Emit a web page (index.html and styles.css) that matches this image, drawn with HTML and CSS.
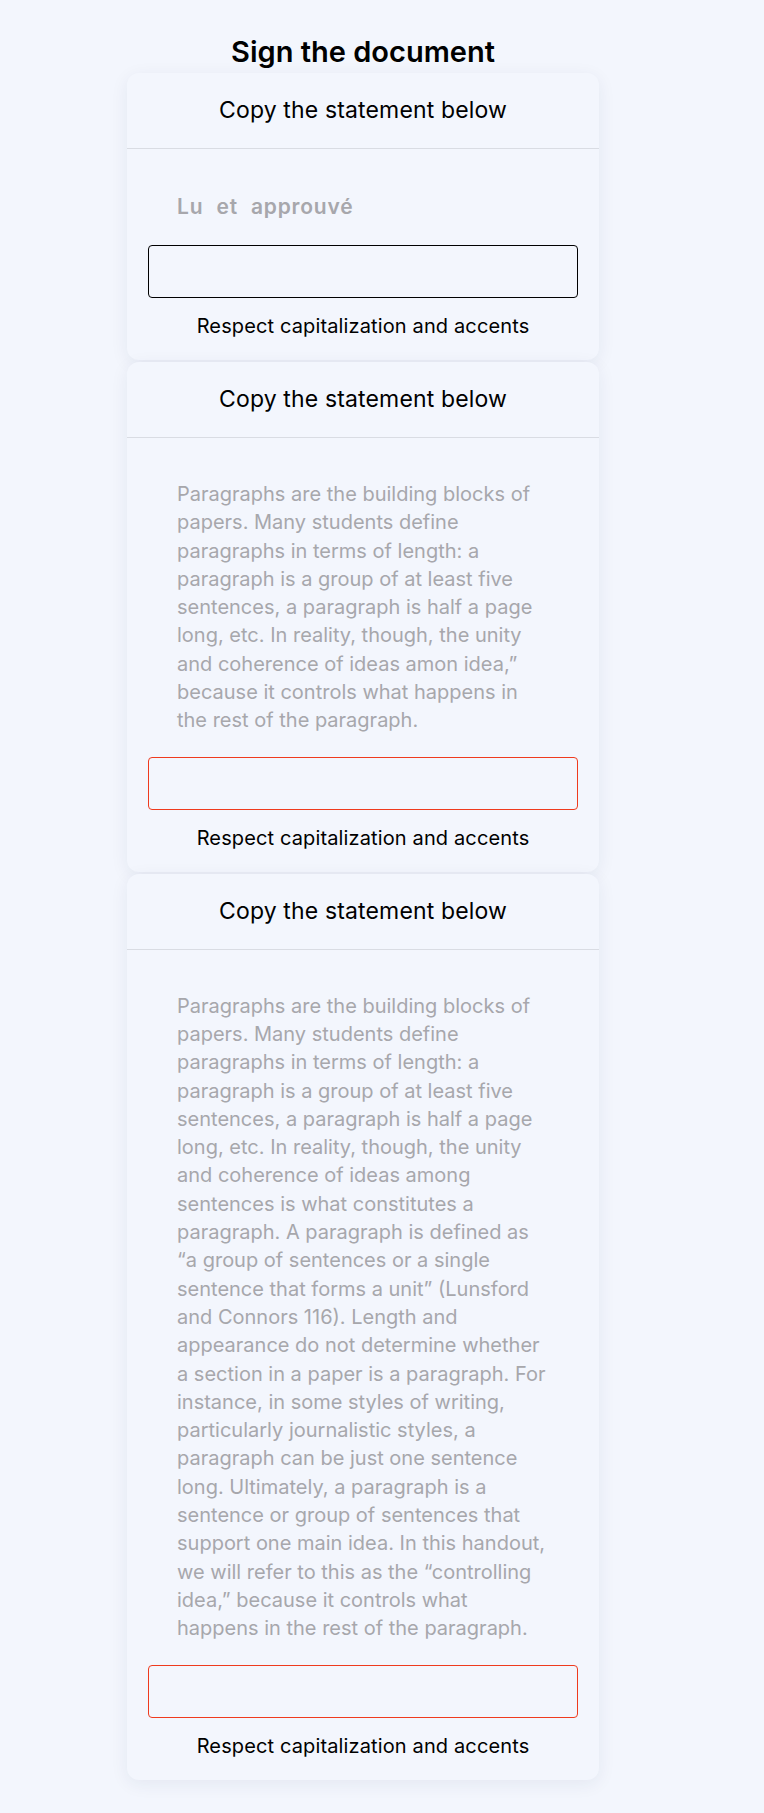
FILE: index.html
```html
<!DOCTYPE html>
<html lang="en">
<head>
<meta charset="utf-8">
<title>Sign the document</title>
<link rel="stylesheet" href="styles.css">
</head>
<body>
<main class="page">
  <h1 class="title">Sign the document</h1>

  <section class="card">
    <header class="card-head">Copy the statement below</header>
    <div class="card-body">
      <p class="statement statement--short">Lu et approuvé</p>
      <input class="sign-input" type="text" aria-label="Statement">
      <p class="hint">Respect capitalization and accents</p>
    </div>
  </section>

  <section class="card">
    <header class="card-head">Copy the statement below</header>
    <div class="card-body">
      <p class="statement">Paragraphs are the building blocks of<br>
papers. Many students define<br>
paragraphs in terms of length: a<br>
paragraph is a group of at least five<br>
sentences, a paragraph is half a page<br>
long, etc. In reality, though, the unity<br>
and coherence of ideas amon idea,”<br>
because it controls what happens in<br>
the rest of the paragraph.</p>
      <input class="sign-input sign-input--error" type="text" aria-label="Statement">
      <p class="hint">Respect capitalization and accents</p>
    </div>
  </section>

  <section class="card">
    <header class="card-head">Copy the statement below</header>
    <div class="card-body">
      <p class="statement">Paragraphs are the building blocks of<br>
papers. Many students define<br>
paragraphs in terms of length: a<br>
paragraph is a group of at least five<br>
sentences, a paragraph is half a page<br>
long, etc. In reality, though, the unity<br>
and coherence of ideas among<br>
sentences is what constitutes a<br>
paragraph. A paragraph is defined as<br>
“a group of sentences or a single<br>
sentence that forms a unit” (Lunsford<br>
and Connors 116). Length and<br>
appearance do not determine whether<br>
a section in a paper is a paragraph. For<br>
instance, in some styles of writing,<br>
particularly journalistic styles, a<br>
paragraph can be just one sentence<br>
long. Ultimately, a paragraph is a<br>
sentence or group of sentences that<br>
support one main idea. In this handout,<br>
we will refer to this as the “controlling<br>
idea,” because it controls what<br>
happens in the rest of the paragraph.</p>
      <input class="sign-input sign-input--error" type="text" aria-label="Statement">
      <p class="hint">Respect capitalization and accents</p>
    </div>
  </section>
</main>
</body>
</html>
```

FILE: styles.css
```css
html, body {
  margin: 0;
  padding: 0;
}

body {
  background: #f3f6fd;
  font-family: Inter, "Open Sans", sans-serif;
  color: #000;
  min-height: 1813px;
}

.page {
  width: 726px;
  padding-top: 34px;
  display: flex;
  flex-direction: column;
  align-items: center;
  gap: 2px;
}

.title {
  margin: 0 0 1px;
  font-size: 29px;
  font-weight: 600;
  line-height: 36px;
}

.card {
  width: 472px;
  background: #f3f6fd;
  border-radius: 12px;
  box-shadow: 0 4px 18px rgba(30, 40, 90, 0.07);
}

.card-head {
  height: 75px;
  line-height: 75px;
  text-align: center;
  font-size: 23px;
  letter-spacing: 0.15px;
  border-bottom: 1px solid #d9dce3;
}

.card-body {
  padding: 42px 21px 20px;
}

.statement {
  margin: 0 29px;
  font-size: 20px;
  line-height: 28.3px;
  color: #a7a7ac;
  white-space: nowrap;
}

.statement--short {
  font-weight: 600;
  font-size: 21px;
  line-height: 32px;
  letter-spacing: 0.8px;
  word-spacing: 7px;
}

.sign-input {
  display: block;
  box-sizing: border-box;
  width: 100%;
  height: 53px;
  margin: 22px 0 0;
  padding: 0 12px;
  border: 1px solid #000;
  border-radius: 4px;
  background: transparent;
  font: inherit;
  outline: none;
}

.sign-input--error {
  border-color: #ef3b1e;
}

.hint {
  margin: 14px 0 0;
  text-align: center;
  font-size: 20px;
  line-height: 28px;
  letter-spacing: 0.13px;
}
```
